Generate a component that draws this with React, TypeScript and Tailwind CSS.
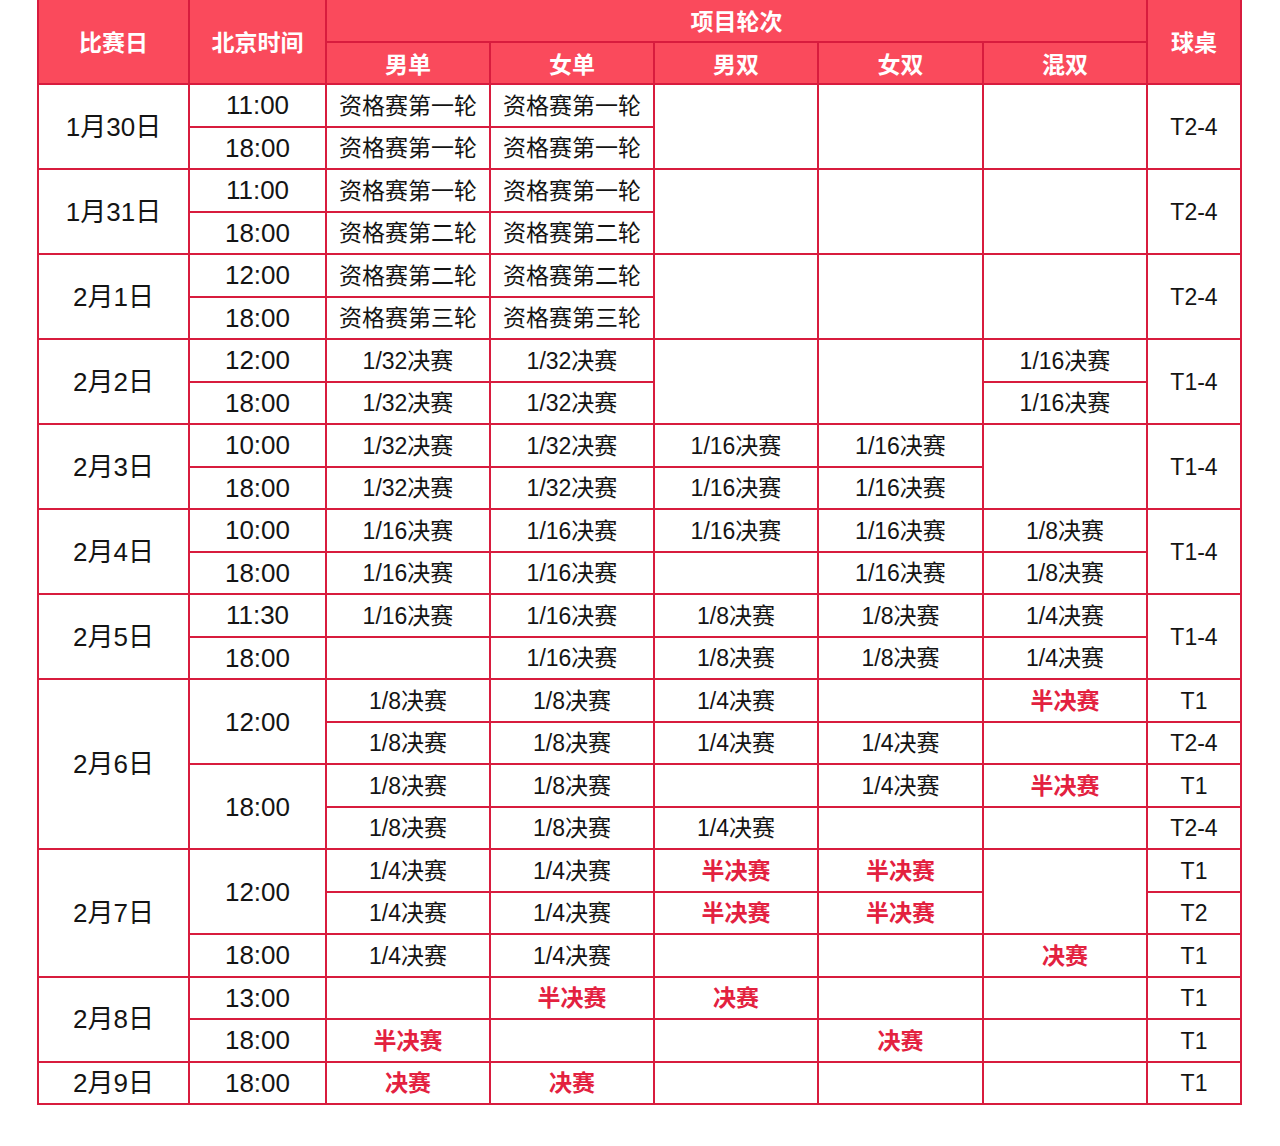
import React from "react";

type Cell = { r: number; c: number; span: number; text: string; red?: boolean };

const Q1 = "资格赛第一轮";
const Q2 = "资格赛第二轮";
const Q3 = "资格赛第三轮";
const F32 = "1/32决赛";
const F16 = "1/16决赛";
const F8 = "1/8决赛";
const F4 = "1/4决赛";
const SF = "#半决赛";
const FN = "#决赛";

type Spec = [number, string] | string;

const columns: Spec[][] = [
  [
    [2, "1月30日"],
    [2, "1月31日"],
    [2, "2月1日"],
    [2, "2月2日"],
    [2, "2月3日"],
    [2, "2月4日"],
    [2, "2月5日"],
    [4, "2月6日"],
    [3, "2月7日"],
    [2, "2月8日"],
    "2月9日",
  ],
  [
    "11:00", "18:00", "11:00", "18:00", "12:00", "18:00", "12:00", "18:00",
    "10:00", "18:00", "10:00", "18:00", "11:30", "18:00",
    [2, "12:00"], [2, "18:00"], [2, "12:00"], "18:00",
    "13:00", "18:00", "18:00",
  ],
  [
    Q1, Q1, Q1, Q2, Q2, Q3,
    F32, F32, F32, F32,
    F16, F16, F16, "",
    F8, F8, F8, F8,
    F4, F4, F4,
    "", SF, FN,
  ],
  [
    Q1, Q1, Q1, Q2, Q2, Q3,
    F32, F32, F32, F32,
    F16, F16, F16, F16,
    F8, F8, F8, F8,
    F4, F4, F4,
    SF, "", FN,
  ],
  [
    [2, ""], [2, ""], [2, ""], [2, ""],
    F16, F16, F16, "",
    F8, F8,
    F4, F4, "", F4,
    SF, SF, "",
    FN, "", "",
  ],
  [
    [2, ""], [2, ""], [2, ""], [2, ""],
    F16, F16, F16, F16,
    F8, F8,
    "", F4, F4, "",
    SF, SF, "",
    "", FN, "",
  ],
  [
    [2, ""], [2, ""], [2, ""],
    F16, F16,
    [2, ""],
    F8, F8,
    F4, F4,
    SF, "", SF, "",
    [2, ""], FN,
    "", "", "",
  ],
  [
    [2, "T2-4"], [2, "T2-4"], [2, "T2-4"],
    [2, "T1-4"], [2, "T1-4"], [2, "T1-4"], [2, "T1-4"],
    "T1", "T2-4", "T1", "T2-4",
    "T1", "T2", "T1",
    "T1", "T1", "T1",
  ],
];

function buildCells(): Cell[] {
  const out: Cell[] = [];
  columns.forEach((col, c) => {
    let r = 0;
    col.forEach((s) => {
      const span = typeof s === "string" ? 1 : s[0];
      let text = typeof s === "string" ? s : s[1];
      let red = false;
      if (text.startsWith("#")) {
        red = true;
        text = text.slice(1);
      }
      out.push({ r, c, span, text, red });
      r += span;
    });
  });
  out.sort((a, b) => (a.r - b.r) || (a.c - b.c));
  return out;
}

const spanClass: Record<number, string> = {
  1: "",
  2: "row-span-2",
  3: "row-span-3",
  4: "row-span-4",
};

const sizeClass: Record<number, string> = {
  0: "text-[26px]",
  1: "text-[26px]",
  2: "text-[23px] pt-[2px]",
  3: "text-[23px] pt-[2px]",
  4: "text-[23px] pt-[2px]",
  5: "text-[23px] pt-[2px]",
  6: "text-[23px] pt-[2px]",
  7: "text-[23px] pt-[2px]",
};

export default function App() {
  const cells = buildCells();
  return (
    <div className="w-[1280px] h-[1146px] bg-white">
      <div className="pl-[37px]">
        <div className="grid w-[1205px] bg-[#d81c3e] gap-[2px] p-[2px] pt-0 grid-cols-[149px_135px_162px_162px_162px_163px_162px_92px] grid-rows-[41px_40px_repeat(24,40.5px)] font-['Liberation_Sans','Noto_Sans_CJK_SC',sans-serif]">
          <div className="row-span-2 bg-[#fa4a5c] flex items-center justify-center text-white font-bold text-[23px] pt-[4px]">
            比赛日
          </div>
          <div className="row-span-2 bg-[#fa4a5c] flex items-center justify-center text-white font-bold text-[23px] pt-[4px]">
            北京时间
          </div>
          <div className="col-span-5 bg-[#fa4a5c] flex items-center justify-center text-white font-bold text-[23px] pt-[3px]">
            项目轮次
          </div>
          <div className="row-span-2 bg-[#fa4a5c] flex items-center justify-center text-white font-bold text-[23px] pt-[4px]">
            球桌
          </div>
          {["男单", "女单", "男双", "女双", "混双"].map((h) => (
            <div
              key={h}
              className="bg-[#fa4a5c] flex items-center justify-center text-white font-bold text-[23px] pt-[4px]"
            >
              {h}
            </div>
          ))}
          {cells.map((cell, i) => (
            <div
              key={i}
              className={`bg-white flex items-center justify-center leading-none whitespace-nowrap ${spanClass[cell.span]} ${sizeClass[cell.c]} ${
                cell.red ? "text-[#e3213f] font-bold" : "text-[#141414]"
              }`}
            >
              {cell.text}
            </div>
          ))}
        </div>
      </div>
    </div>
  );
}
